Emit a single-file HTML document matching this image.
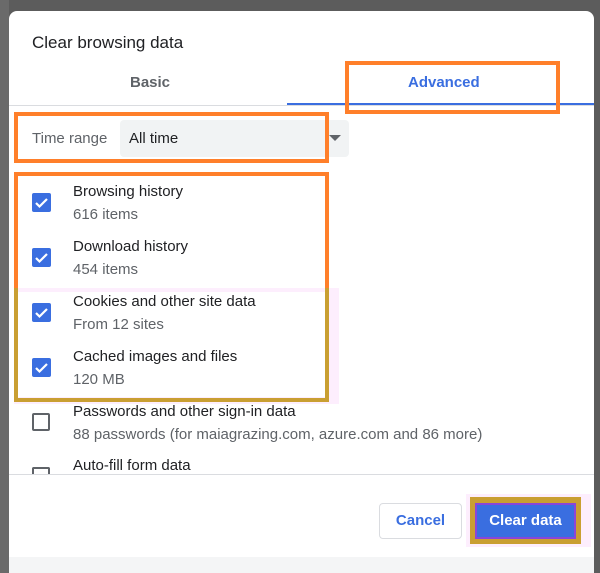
<!DOCTYPE html>
<html style="overflow:hidden;height:573px"><head><style>
*{margin:0;padding:0;box-sizing:border-box}
body{width:600px;height:573px;background:#5c5c5c;position:relative;overflow:hidden;font-family:"Liberation Sans",Arial,sans-serif}
.a{position:absolute}
.dlg{left:9px;top:11px;width:585px;height:562px;background:#fff;border-radius:8px 8px 0 0}
.t{font-size:15px;color:#202124}
.s{font-size:15px;color:#5f6368}
.cb{width:19px;height:19px;background:#3a6ee0;border-radius:2px}
.cb svg{display:block}
.ub{width:18px;height:18px;border:2px solid #5f6368;border-radius:2px;background:#fff}
</style></head><body>
<div class="a" style="left:0;top:0;width:9px;height:573px;background:#6a6a6a"></div>
<div class="a dlg"></div>
<div class="a" style="left:9px;top:557px;width:585px;height:16px;background:#f4f5f6"></div>
<div class="a" style="left:32px;top:33px;font-size:17px;color:#202124">Clear browsing data</div>
<div class="a" style="left:130px;top:74px;font-size:15px;color:#5f6368;font-weight:bold">Basic</div>
<div class="a" style="left:408px;top:74px;font-size:15px;color:#3a6ee0;font-weight:bold">Advanced</div>
<div class="a" style="left:9px;top:105px;width:585px;height:1px;background:#dadce0"></div>
<div class="a" style="left:287px;top:103px;width:307px;height:2px;background:#3a6ee0"></div>
<div class="a" style="left:345px;top:61px;width:215px;height:53px;border:4px solid #ff7f2a"></div>
<div class="a" style="left:120px;top:120px;width:229px;height:37px;background:#f1f3f4;border-radius:4px"></div>
<div class="a" style="left:329px;top:135px;width:0;height:0;border-left:6px solid transparent;border-right:6px solid transparent;border-top:6px solid #5f6368"></div>
<div class="a" style="left:32px;top:130px;font-size:15px;color:#5f6368">Time range</div>
<div class="a" style="left:129px;top:130px;font-size:15px;color:#202124">All time</div>
<div class="a" style="left:14px;top:112px;width:315px;height:51px;border:4px solid #ff7f2a"></div>

<div class="a" style="left:14px;top:288px;width:325px;height:116px;background:#fdeefd"></div>
<div class="a" style="left:18px;top:292px;width:308px;height:105px;background:#fff"></div>
<div class="a" style="left:14px;top:172px;width:315px;height:230px;border:4px solid #c99f32;border-top-color:#ff7f2a"></div>
<div class="a" style="left:14px;top:172px;width:4px;height:116px;background:#ff7f2a"></div>
<div class="a" style="left:325px;top:172px;width:4px;height:116px;background:#ff7f2a"></div>

<div class="a cb" style="left:32px;top:193px"><svg width="19" height="19"><path d="M4 10l3.5 3.5L15 6" stroke="#fff" stroke-width="2.2" fill="none"/></svg></div>
<div class="a t" style="left:73px;top:183px">Browsing history</div>
<div class="a s" style="left:73px;top:206px">616 items</div>
<div class="a cb" style="left:32px;top:248px"><svg width="19" height="19"><path d="M4 10l3.5 3.5L15 6" stroke="#fff" stroke-width="2.2" fill="none"/></svg></div>
<div class="a t" style="left:73px;top:238px">Download history</div>
<div class="a s" style="left:73px;top:261px">454 items</div>
<div class="a cb" style="left:32px;top:303px"><svg width="19" height="19"><path d="M4 10l3.5 3.5L15 6" stroke="#fff" stroke-width="2.2" fill="none"/></svg></div>
<div class="a t" style="left:73px;top:293px">Cookies and other site data</div>
<div class="a s" style="left:73px;top:316px">From 12 sites</div>
<div class="a cb" style="left:32px;top:358px"><svg width="19" height="19"><path d="M4 10l3.5 3.5L15 6" stroke="#fff" stroke-width="2.2" fill="none"/></svg></div>
<div class="a t" style="left:73px;top:348px">Cached images and files</div>
<div class="a s" style="left:73px;top:371px">120 MB</div>
<div class="a ub" style="left:32px;top:413px"></div>
<div class="a t" style="left:73px;top:403px">Passwords and other sign-in data</div>
<div class="a s" style="left:73px;top:426px">88 passwords (for maiagrazing.com, azure.com and 86 more)</div>
<div class="a t" style="left:73px;top:457px">Auto-fill form data</div>
<div class="a" style="left:32px;top:467px;width:18px;height:8px;border:2px solid #5f6368;border-bottom:none;border-radius:2px 2px 0 0"></div>
<div class="a" style="left:9px;top:474px;width:585px;height:1px;background:#dadce0"></div>

<div class="a" style="left:379px;top:503px;width:83px;height:36px;border:1px solid #dadce0;border-radius:4px;color:#3a6ee0;font-size:15px;font-weight:bold;text-align:center;line-height:34px">Cancel</div>
<div class="a" style="left:466px;top:494px;width:125px;height:53px;background:#fdeefd"></div>
<div class="a" style="left:470px;top:497px;width:111px;height:47px;background:#c99f32"></div>
<div class="a" style="left:475px;top:503px;width:101px;height:36px;background:#3a6ee0;border:2px solid #8a46d8;color:#fff;font-size:15px;font-weight:bold;text-align:center;line-height:32px">Clear data</div>
</body></html>
